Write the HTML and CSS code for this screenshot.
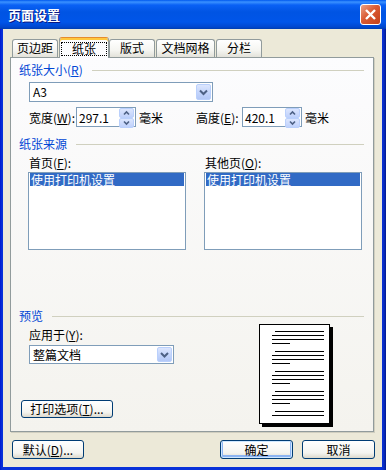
FILE: index.html
```html
<!DOCTYPE html>
<html lang="zh-CN">
<head>
    <meta charset="UTF-8">
    <title>页面设置</title>
    <link rel="stylesheet" href="styles.css">
</head>
<body>
    <div class="window">
        <div class="titlebar">
            <span class="title">页面设置</span>
            <span class="close">
                <svg width="19" height="19" viewBox="0 0 19 19"><path d="M5 5L14 14M14 5L5 14" stroke="#fff" stroke-width="2.4" fill="none"/></svg>
            </span>
        </div>
        <div class="client">
            <div class="tabs">
                <div class="tab">页边距</div>
                <div class="tab active"><span class="focus">纸张</span></div>
                <div class="tab">版式</div>
                <div class="tab wide">文档网格</div>
                <div class="tab">分栏</div>
            </div>
            <div class="panel">
                <div class="group-title"><span>纸张大小(<u>R</u>)</span></div>
                <div class="combo paper-combo">
                    <span class="combo-text">A3</span>
                    <span class="combo-btn"><svg width="13" height="14" viewBox="0 0 13 14"><path d="M3 5.5L6.5 9L10 5.5" stroke="#4D6185" stroke-width="2" fill="none"/></svg></span>
                </div>
                <div class="dims">
                    <div class="dim">
                        <span class="dim-label">宽度(<u>W</u>):</span>
                        <span class="spin">
                            <span class="spin-text">297.1</span>
                            <span class="spin-btns">
                                <span class="spin-btn"><svg width="13" height="8" viewBox="0 0 13 8"><path d="M4 5.5L6.5 3L9 5.5" stroke="#4D6185" stroke-width="1.6" fill="none"/></svg></span>
                                <span class="spin-btn"><svg width="13" height="8" viewBox="0 0 13 8"><path d="M4 2.5L6.5 5L9 2.5" stroke="#4D6185" stroke-width="1.6" fill="none"/></svg></span>
                            </span>
                        </span>
                        <span class="unit">毫米</span>
                    </div>
                    <div class="dim">
                        <span class="dim-label">高度(<u>E</u>):</span>
                        <span class="spin">
                            <span class="spin-text">420.1</span>
                            <span class="spin-btns">
                                <span class="spin-btn"><svg width="13" height="8" viewBox="0 0 13 8"><path d="M4 5.5L6.5 3L9 5.5" stroke="#4D6185" stroke-width="1.6" fill="none"/></svg></span>
                                <span class="spin-btn"><svg width="13" height="8" viewBox="0 0 13 8"><path d="M4 2.5L6.5 5L9 2.5" stroke="#4D6185" stroke-width="1.6" fill="none"/></svg></span>
                            </span>
                        </span>
                        <span class="unit">毫米</span>
                    </div>
                </div>

                <div class="group-title source-title"><span>纸张来源</span></div>
                <div class="sources">
                    <div class="source">
                        <div class="source-label">首页(<u>F</u>):</div>
                        <div class="listbox"><div class="item selected">使用打印机设置</div></div>
                    </div>
                    <div class="source">
                        <div class="source-label">其他页(<u>O</u>):</div>
                        <div class="listbox"><div class="item selected">使用打印机设置</div></div>
                    </div>
                </div>

                <div class="group-title preview-title"><span>预览</span></div>
                <div class="preview">
                    <div class="preview-left">
                        <div class="apply-label">应用于(<u>Y</u>):</div>
                        <div class="combo apply-combo">
                            <span class="combo-text">整篇文档</span>
                            <span class="combo-btn"><svg width="13" height="14" viewBox="0 0 13 14"><path d="M3 5L6.5 8.5L10 5" stroke="#4D6185" stroke-width="2" fill="none"/></svg></span>
                        </div>
                        <button class="btn print-btn">打印选项(<u>T</u>)...</button>
                    </div>
                    <div class="page">
                        <div class="para"><i class="ln indent"></i><i class="ln"></i><i class="ln"></i><i class="ln short"></i></div>
                        <div class="para"><i class="ln indent"></i><i class="ln"></i><i class="ln"></i><i class="ln short"></i></div>
                        <div class="para"><i class="ln indent"></i><i class="ln"></i><i class="ln"></i><i class="ln short"></i></div>
                        <div class="para"><i class="ln indent"></i><i class="ln"></i><i class="ln"></i><i class="ln short"></i></div>
                        <div class="para"><i class="ln indent"></i><i class="ln"></i></div>
                    </div>
                </div>
            </div>
            <div class="footer">
                <button class="btn small">默认(<u>D</u>)...</button>
                <button class="btn default ok">确定</button>
                <button class="btn cancel">取消</button>
            </div>
        </div>
    </div>
</body>
</html>
```

FILE: styles.css
```css
* {
    box-sizing: border-box;
}
body {
    margin: 0;
    font-family: "Noto Sans CJK SC", sans-serif;
    font-size: 12px;
    color: #000;
}
u {
    text-decoration: underline;
}
.window {
    width: 386px;
    height: 470px;
    background: linear-gradient(to right, #0019CF, #0831D9 2px, #0831D9 382px, #0A2BC0 384px, #001A8E);
    display: flex;
    flex-direction: column;
}
.titlebar {
    height: 29px;
    flex: none;
    display: flex;
    align-items: center;
    padding: 0 5px 0 8px;
    background: linear-gradient(#0058EE 0, #3B92FF 2px, #0A61F5 5px, #0054E3 12px, #0055E9 22px, #0047CF 27px, #003DAF 29px);
}
.title {
    flex: 1;
    color: #fff;
    font-weight: bold;
    font-size: 13px;
    line-height: 14px;
    text-shadow: 1px 1px #0A1883;
}
.close {
    width: 21px;
    height: 21px;
    border: 1px solid #fff;
    border-radius: 3px;
    background: linear-gradient(135deg, #EBA287, #DA5A33 45%, #C4401A);
    display: flex;
}

/* client area */
.client {
    flex: 1;
    margin: 0 4px 3px 3px;
    background: #ECE9D8;
    padding: 8px 7px 0 7px;
    display: flex;
    flex-direction: column;
}
.tabs {
    display: flex;
    align-items: flex-end;
    height: 21px;
    margin: 0 0 -1px 2px;
    position: relative;
    z-index: 1;
}
.tab {
    width: 46px;
    height: 18px;
    margin-bottom: 1px;
    border: 1px solid #919B9C;
    border-bottom: none;
    border-radius: 3px 3px 0 0;
    background: linear-gradient(#FFFFFF, #F5F5F1 60%, #E3E2DA);
    text-align: center;
    line-height: 16px;
}
.tab + .tab {
    margin-left: 1px;
}
.tab.wide {
    width: 59px;
}
.tab.active {
    width: 50px;
    height: 21px;
    margin-bottom: 0;
    background: #FCFCFE;
    border-top-color: #E68B2C;
    box-shadow: inset 0 2px #FFC73C;
    padding-top: 4px;
}
.tab.active + .tab {
    margin-left: 0;
}
.focus {
    display: block;
    width: 46px;
    height: 14px;
    margin: 0 auto;
    border: 1px dotted #000;
    line-height: 12px;
}
.panel {
    width: 364px;
    height: 375px;
    border: 1px solid #919B9C;
    background: linear-gradient(#FCFCFE, #F4F3EE);
    box-shadow: 1px 1px 0 #D0CEBF;
    padding: 5px 9px 0 8px;
    display: flex;
    flex-direction: column;
}
.group-title {
    display: flex;
    align-items: center;
    gap: 9px;
    height: 14px;
    line-height: 14px;
    color: #0046D5;
}
.group-title::after {
    content: "";
    flex: 1;
    height: 1px;
    margin-top: 1px;
    background: #D0D0BF;
}
.source-title {
    margin-top: 10px;
}
.preview-title {
    margin-top: 59px;
}

/* combos and spinners */
.combo {
    display: flex;
    align-items: center;
    height: 20px;
    border: 1px solid #7F9DB9;
    background: #fff;
    padding: 0 1px 0 3px;
}
.combo-text {
    flex: 1;
    line-height: 16px;
}
.combo-btn {
    width: 15px;
    height: 16px;
    border: 1px solid #BAD0FC;
    border-radius: 2px;
    background: linear-gradient(#DCE6FE, #C1D3FB 60%, #B3C8F7);
    display: flex;
    align-items: center;
    justify-content: center;
}
.paper-combo {
    width: 184px;
    margin: 5px 0 0 10px;
}
.dims {
    display: flex;
    align-items: center;
    height: 20px;
    margin: 5px 0 0 10px;
}
.dim {
    display: flex;
    align-items: center;
}
.dim + .dim {
    margin-left: 33px;
}
.dim-label {
    width: 47px;
}
.dim + .dim .dim-label {
    width: 46px;
}
.spin {
    width: 60px;
    height: 20px;
    border: 1px solid #7F9DB9;
    background: #fff;
    display: flex;
    align-items: center;
    padding: 0 1px 0 2px;
}
.spin-text {
    flex: 1;
}
.spin-btns {
    display: flex;
    flex-direction: column;
    width: 15px;
    height: 18px;
}
.spin-btn {
    flex: 1;
    border: 1px solid #BAD0FC;
    border-radius: 2px;
    background: linear-gradient(#DCE6FE, #BFD1FB);
    display: flex;
    align-items: center;
    justify-content: center;
}
.unit {
    margin-left: 3px;
}

/* paper source */
.sources {
    display: flex;
    gap: 18px;
    margin: 5px 0 0 9px;
}
.source {
    width: 158px;
}
.source-label {
    height: 14px;
    line-height: 14px;
    margin: 0 0 2px 1px;
}
.listbox {
    height: 78px;
    border: 1px solid #7F9DB9;
    background: #fff;
    padding: 0 1px;
}
.item {
    height: 13px;
    line-height: 13px;
    padding-left: 1px;
}
.item.selected {
    background: #316AC5;
    color: #fff;
}

/* preview */
.preview {
    display: flex;
}
.preview-left {
    width: 240px;
    display: flex;
    flex-direction: column;
    align-items: flex-start;
}
.apply-label {
    line-height: 14px;
    margin: 5px 0 0 10px;
}
.apply-combo {
    width: 145px;
    height: 19px;
    margin: 3px 0 0 10px;
}
.apply-combo .combo-btn {
    height: 15px;
}
.page {
    width: 71px;
    height: 100px;
    margin-top: 1px;
    border: 1px solid #000;
    background: #fff;
    box-shadow: 3px 3px 0 #000;
    padding: 6px 0 0 12px;
}
.para {
    display: flex;
    flex-direction: column;
    gap: 3px;
}
.para + .para {
    margin-top: 7px;
}
.ln {
    display: block;
    width: 52px;
    height: 1px;
    background: #000;
}
.ln.indent {
    width: 49px;
    margin-left: 3px;
}
.ln.short {
    width: 18px;
}

/* buttons */
.btn {
    font-family: inherit;
    font-size: 12px;
    color: #000;
    height: 19px;
    padding: 0;
    border: 1px solid #003C74;
    border-radius: 3px;
    background: linear-gradient(#FFFFFF, #F4F4F0 70%, #DCD8CC);
    display: flex;
    align-items: center;
    justify-content: center;
    line-height: 14px;
}
.print-btn {
    width: 92px;
    height: 18px;
    margin: 36px 0 0 2px;
}
.footer {
    display: flex;
    margin-top: 8px;
    padding-left: 2px;
}
.small {
    width: 72px;
}
.ok {
    width: 73px;
    margin-left: auto;
}
.cancel {
    width: 73px;
    margin-left: 9px;
}
.default {
    box-shadow: inset 0 0 0 1px #CEE7FF, inset 0 -1px 0 2px #8CB4F2;
}
```
